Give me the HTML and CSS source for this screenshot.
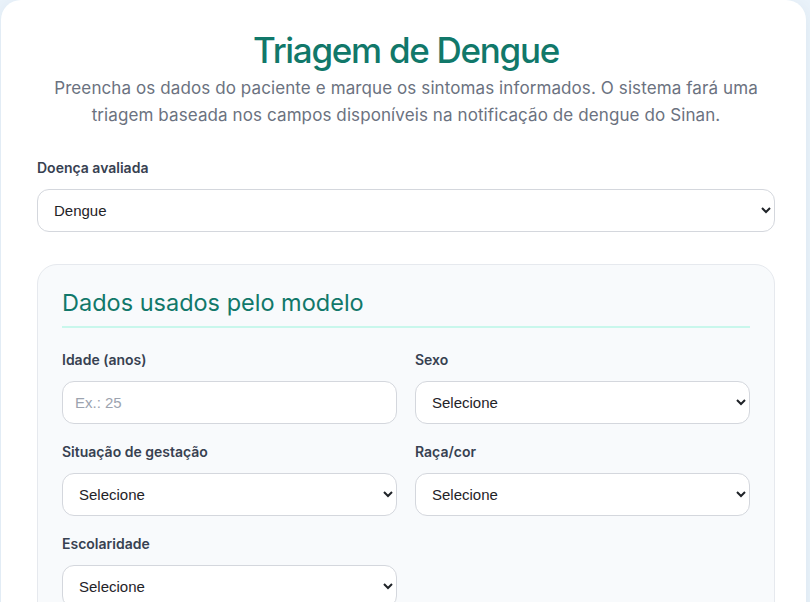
FILE: index.html
```html
<!DOCTYPE html>
<html lang="pt-BR">
  <head>
    <meta charset="UTF-8" />
    <meta name="viewport" content="width=device-width, initial-scale=1.0" />
    <title>Triagem de Dengue</title>
    <link rel="stylesheet" href="styles.css">
  </head>
  <body>
    <main class="card">
      <header class="page-header">
        <h1>Triagem de Dengue</h1>
        <p>
          Preencha os dados do paciente e marque os sintomas informados. O sistema fará uma
          triagem baseada nos campos disponíveis na notificação de dengue do Sinan.
        </p>
      </header>

      <div class="field">
        <label for="doenca">Doença avaliada</label>
        <select id="doenca">
          <option>Dengue</option>
        </select>
      </div>

      <section class="panel">
        <h2>Dados usados pelo modelo</h2>
        <div class="form-grid">
          <div class="field">
            <label for="idade">Idade (anos)</label>
            <input id="idade" type="number" placeholder="Ex.: 25" />
          </div>
          <div class="field">
            <label for="sexo">Sexo</label>
            <select id="sexo">
              <option>Selecione</option>
            </select>
          </div>
          <div class="field">
            <label for="gestacao">Situação de gestação</label>
            <select id="gestacao">
              <option>Selecione</option>
            </select>
          </div>
          <div class="field">
            <label for="raca">Raça/cor</label>
            <select id="raca">
              <option>Selecione</option>
            </select>
          </div>
          <div class="field">
            <label for="escolaridade">Escolaridade</label>
            <select id="escolaridade">
              <option>Selecione</option>
            </select>
          </div>
        </div>
      </section>
    </main>
  </body>
</html>
```

FILE: styles.css
```css
:root {
  --page-bg: #e9f2fa;
  --teal: #11786a;
  --text-muted: #6b7280;
  --label-color: #374151;
  --input-border: #d4d7dd;
  --panel-bg: #f8fafc;
  --panel-border: #e6e9ee;
}

body {
  margin: 0;
  font-family: Inter, "Noto Sans", sans-serif;
  background-color: var(--page-bg);
  overflow: hidden;
}

.card {
  margin: 0 4px 0 1px;
  padding: 29px 31px 40px 36px;
  background-color: #fff;
  border-radius: 20px;
  box-shadow: 0 4px 16px rgba(30, 60, 90, 0.06);
}

.page-header {
  text-align: center;
  margin-bottom: 30px;
}

.page-header h1 {
  margin: 0 0 3px;
  font-size: 35px;
  line-height: 43px;
  font-weight: 500;
  letter-spacing: -1.3px;
  color: var(--teal);
}

.page-header p {
  margin: 0;
  font-size: 17px;
  line-height: 27px;
  letter-spacing: 0.1px;
  color: var(--text-muted);
}

.field label {
  display: block;
  margin-bottom: 12px;
  font-size: 14px;
  line-height: 18px;
  font-weight: 600;
  color: var(--label-color);
}

.field select,
.field input {
  display: block;
  width: 100%;
  height: 43px;
  box-sizing: border-box;
  padding: 0 12px;
  font-family: "Liberation Sans", Arial, sans-serif;
  font-size: 15px;
  color: #1f2328;
  background-color: #fff;
  border: 1px solid var(--input-border);
  border-radius: 12px;
}

.field input::placeholder {
  color: #9ca3af;
}

.panel {
  margin-top: 32px;
  padding: 24px 24px 30px;
  background-color: var(--panel-bg);
  border: 1px solid var(--panel-border);
  border-radius: 20px;
}

.panel h2 {
  margin: 0 0 23px;
  padding-bottom: 10px;
  font-size: 23.5px;
  line-height: 27px;
  font-weight: 400;
  color: var(--teal);
  border-bottom: 2px solid #c9f7ec;
}

.form-grid {
  display: grid;
  grid-template-columns: 1fr 1fr;
  column-gap: 18px;
  row-gap: 19px;
}
```
